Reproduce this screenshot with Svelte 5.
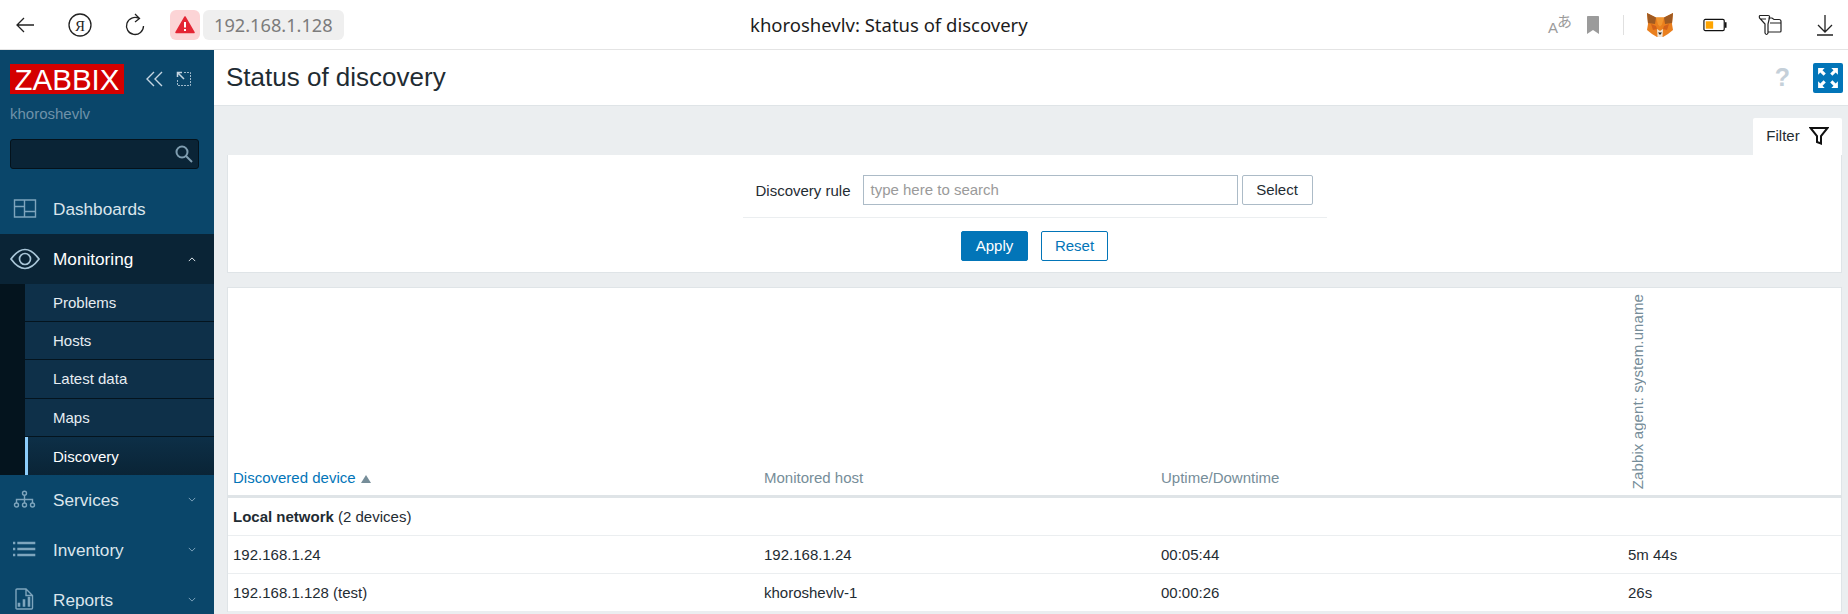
<script>
	const sections = [
		{ label: 'Dashboards', icon: 'dash' },
		{ label: 'Monitoring', icon: 'eye', open: true },
		{ label: 'Services', icon: 'tree', more: true },
		{ label: 'Inventory', icon: 'list', more: true },
		{ label: 'Reports', icon: 'report', more: true }
	];
	const submenu = ['Problems', 'Hosts', 'Latest data', 'Maps', 'Discovery'];
	const rows = [
		{ device: '192.168.1.24', host: '192.168.1.24', uptime: '00:05:44', uname: '5m 44s' },
		{ device: '192.168.1.128 (test)', host: 'khoroshevlv-1', uptime: '00:00:26', uname: '26s' }
	];
</script>

<div class="page">
	<header class="browser">
		<div class="tools">
			<svg class="tool" viewBox="0 0 24 24" fill="none" stroke="#222" stroke-width="1.3">
				<path d="M21 12H4M11 5l-7 7 7 7" />
			</svg>
			<svg class="tool" viewBox="0 0 24 24" fill="none" stroke="#222" stroke-width="1.3">
				<circle cx="12" cy="12" r="11" />
				<text x="12" y="17.500" text-anchor="middle" class="ya">Я</text>
			</svg>
			<svg class="tool" viewBox="0 0 24 24" fill="none" stroke="#222" stroke-width="1.3">
				<path d="M16 5.500A8.500 8.500 0 1 0 20.500 13M12 1l4.500 4.500L12 9" />
			</svg>
			<span class="warn">
				<svg viewBox="0 0 20 20" width="20" height="20">
					<path d="M10 2 19 17.500H1Z" fill="#e42535" stroke="#e42535" stroke-width="1.500" stroke-linejoin="round" />
					<path d="M9 7h2v5.500H9zM9 14h2v2H9z" fill="#fff" />
				</svg>
			</span>
			<span class="address">192.168.1.128</span>
		</div>
		<div class="tab-title">khoroshevlv: Status of discovery</div>
		<div class="tools tools-right">
			<span class="translate"><span>A</span><span class="kana">あ</span></span>
			<svg class="tool" viewBox="0 0 24 24">
				<path d="M6 3.500Q6 3 7 3h10q1 0 1 .5V21l-6-4-6 4Z" fill="#9b9b9b" />
			</svg>
			<span class="sep"></span>
			<svg class="tool fox" viewBox="0 0 26 24">
				<path d="M0 0 9 4.500h8L26 0l-1 11 1 6-5 4-5 3h-6l-5-3-5-4 1-6Z" fill="#ea7f1d" />
				<path d="M0 0 9 4.500 8 11 1 10ZM26 0 17 4.500 18 11l7-1Z" fill="#9f5a22" />
				<path d="M9 4.500h8l-2 7-2 2-2-2Z" fill="#f2962f" />
				<path d="M4 11l5 2 1 3-4 1ZM22 11l-5 2-1 3 4 1Z" fill="#d2601a" />
				<path d="M10 16l3 2 3-2-.5 8h-5Z" fill="#f1e6d8" />
				<path d="M11 19.500h4L13 22Z" fill="#222" />
			</svg>
			<svg class="tool" viewBox="0 0 26 24">
				<rect x="1" y="6" width="22" height="12" rx="1.500" fill="#fff" stroke="#111" stroke-width="1.300" />
				<rect x="3" y="8" width="8" height="8" fill="#ffa500" />
				<rect x="23.500" y="9" width="2" height="6" fill="#111" />
			</svg>
			<svg class="tool" viewBox="0 0 24 24" fill="none" stroke="#222" stroke-width="1.200">
				<path d="M2 2.500h8q2 0 1.500 2L10 11v9q-1.500 3-3 0v-9L1.500 5Q1 2.500 2 2.500ZM3 6h5" />
				<path d="M10.500 5H14l2 1.500h5q2 0 2 2V18q0 1-1 1H10M12 10h11" />
			</svg>
			<svg class="tool" viewBox="0 0 24 24" fill="none" stroke="#222" stroke-width="1.300">
				<path d="M12 2v17M5 12l7 7 7-7M4 22h16" />
			</svg>
		</div>
	</header>

	<div class="body">
		<aside class="sidebar">
			<div class="brand">
				<div class="logo-row">
					<span class="logo">ZABBIX</span>
					<svg class="collapse" viewBox="0 0 18 16" fill="none" stroke="#c5d6e2" stroke-width="1.400">
						<path d="M9 1 2 8l7 7M17 1l-7 7 7 7" />
					</svg>
					<svg class="expand" viewBox="0 0 16 16" fill="none" stroke="#9db8ca">
						<path d="M8 1.500h6.500v13h-13V8" stroke-dasharray="2 1" />
						<path d="M2 2l6 6M1.500 6V1.500H6" stroke="#c5d6e2" stroke-width="1.500" />
					</svg>
				</div>
				<div class="user">khoroshevlv</div>
				<div class="search">
					<svg viewBox="0 0 18 18" width="18" height="18" fill="none" stroke="#7f9db0" stroke-width="2">
						<circle cx="7" cy="7" r="5.500" />
						<path d="M11 11l6 6" />
					</svg>
				</div>
			</div>

			<nav>
				{#each sections as item}
					<div class="item" class:open={item.open}>
						<svg class="item-icon" viewBox="0 0 24 24" fill="none" stroke="#7ea5bd" stroke-width="1.400">
							{#if item.icon === 'dash'}
								<path d="M1.500 3h21v17h-21ZM11.500 3v17M11.500 14.500h11M1.500 9.500h10" />
							{:else if item.icon === 'eye'}
								<path d="M-2 12q14-19 28 0q-14 19-28 0Z" stroke="#a9c6d8" stroke-width="1.700" />
								<circle cx="12" cy="12" r="5.500" stroke="#a9c6d8" stroke-width="1.700" />
							{:else if item.icon === 'tree'}
								<circle cx="11.500" cy="5.300" r="2" />
								<circle cx="3.500" cy="17" r="2" />
								<circle cx="11.500" cy="17" r="2" />
								<circle cx="19.500" cy="17" r="2" />
								<path d="M11.500 7.300V15M3.500 15v-3.500h16V15" />
							{:else if item.icon === 'list'}
								<path d="M0 5h2.300M0 11h2.300M0 17h2.300M4.300 5h18M4.300 11h18M4.300 17h18" stroke-width="2.500" />
							{:else}
								<path d="M4 1h9l6.500 6.500V20q0 1-1 1H4q-1 0-1-1V2q0-1 1-1ZM13 1v6.500h6.500" />
								<path d="M6 18.700v-4M11 18.700v-7.500M16 18.700v-10" stroke-width="2.600" />
							{/if}
						</svg>
						<span class="item-label">{item.label}</span>
						{#if item.open || item.more}
							<svg class="chevron" viewBox="0 0 10 6" fill="none" stroke={item.open ? '#e6eef3' : '#7ea5bd'} stroke-width="1.200">
								<path d={item.open ? 'M1 5l4-4 4 4' : 'M1 1l4 4 4-4'} />
							</svg>
						{/if}
					</div>
					{#if item.open}
						<ul class="submenu">
							{#each submenu as entry}
								<li class:selected={entry === 'Discovery'}>{entry}</li>
							{/each}
						</ul>
					{/if}
				{/each}
			</nav>
		</aside>

		<main>
			<div class="title-bar">
				<h1>Status of discovery</h1>
				<span class="help">?</span>
				<span class="kiosk">
					<svg viewBox="0 0 20 20" width="22" height="22" fill="#fff">
						<path d="M1 1h6L5 3l3 3-2 2-3-3-2 2ZM19 1h-6l2 2-3 3 2 2 3-3 2 2ZM1 19h6l-2-2 3-3-2-2-3 3-2-2ZM19 19h-6l2-2-3-3 2-2 3 3 2-2Z" />
					</svg>
				</span>
			</div>

			<div class="content">
				<div class="filter-tab">
					<span>Filter</span>
					<svg viewBox="0 0 20 20" width="20" height="20" fill="none" stroke="#111" stroke-width="2">
						<path d="M1.500 2h17l-6.500 8v7.500l-4-1.500v-6Z" />
					</svg>
				</div>
				<section class="filter">
					<div class="form">
						<div class="form-row">
							<span class="form-label">Discovery rule</span>
							<span class="input">type here to search</span>
							<span class="button">Select</span>
						</div>
						<div class="form-actions">
							<span class="apply">Apply</span>
							<span class="reset">Reset</span>
						</div>
					</div>
				</section>

				<section class="results">
					<table>
						<colgroup>
							<col style="width: 531px" />
							<col style="width: 397px" />
							<col style="width: 467px" />
							<col />
						</colgroup>
						<thead>
							<tr>
								<th class="sorted">Discovered device <span class="arrow"></span></th>
								<th>Monitored host</th>
								<th>Uptime/Downtime</th>
								<th><span class="vertical">Zabbix agent: system.uname</span></th>
							</tr>
						</thead>
						<tbody>
							<tr>
								<td class="group" colspan="4"><b>Local network</b> (2 devices)</td>
							</tr>
							{#each rows as row}
								<tr>
									<td>{row.device}</td>
									<td>{row.host}</td>
									<td>{row.uptime}</td>
									<td>{row.uname}</td>
								</tr>
							{/each}
						</tbody>
					</table>
				</section>
			</div>
		</main>
	</div>
</div>

<style>
	:global(body) {
		margin: 0;
		background: #ebeef0;
		font-family: 'Liberation Sans', Arial, sans-serif;
	}

	.page {
		display: flex;
		flex-direction: column;
		width: 1848px;
		height: 614px;
		overflow: hidden;
	}

	.browser {
		display: grid;
		grid-template-columns: 750px auto 1fr;
		align-items: center;
		flex: none;
		height: 49px;
		background: #fff;
		border-bottom: 1px solid #e4e4e4;
	}

	.tools {
		display: flex;
		align-items: center;
		gap: 31px;
		padding-left: 13px;
	}

	.tools-right {
		justify-content: flex-end;
		padding: 0 11px 0 0;
	}

	.tool {
		flex: none;
		width: 24px;
		height: 24px;
	}

	.fox {
		width: 26px;
		margin: 0 -1px;
	}

	.ya {
		font: 15px 'Liberation Serif', serif;
		fill: #222;
		stroke: none;
	}

	.warn {
		display: flex;
		align-items: center;
		justify-content: center;
		width: 30px;
		height: 30px;
		margin-left: -8px;
		background: #fcd4d6;
		border-radius: 6px;
	}

	.address {
		margin-left: -28px;
		padding: 0 11px;
		line-height: 30px;
		background: #efefef;
		border-radius: 6px;
		color: #7c7c7c;
		font: 18.200px/30px 'Noto Sans', sans-serif;
	}

	.tab-title {
		color: #1c1c1c;
		font: 18.500px 'Noto Sans', sans-serif;
	}

	.translate {
		position: relative;
		flex: none;
		width: 22px;
		height: 24px;
		padding-left: 2px;
		margin-right: -20px;
		color: #9b9b9b;
		font-size: 15px;
		line-height: 30px;
	}

	.kana {
		position: absolute;
		top: -4px;
		left: 11px;
		font: 15px/24px 'Noto Sans CJK JP', sans-serif;
	}

	.sep {
		flex: none;
		width: 1px;
		height: 20px;
		margin: 0 -7px 0 -13px;
		background: #e0e0e0;
	}

	.body {
		display: flex;
		flex: 1;
		min-height: 0;
	}

	.sidebar {
		flex: none;
		width: 214px;
		background: #0a466a;
	}

	.brand {
		height: 134px;
		padding: 14px 15px 0 10px;
		box-sizing: border-box;
	}

	.logo-row {
		display: flex;
		align-items: center;
	}

	.logo {
		width: 114px;
		height: 30px;
		background: #d40000;
		color: #fff;
		font-size: 29.500px;
		line-height: 31px;
		text-align: center;
	}

	.collapse {
		width: 18px;
		height: 16px;
		margin-left: 21px;
	}

	.expand {
		width: 16px;
		height: 16px;
		margin-left: 13px;
	}

	.user {
		margin-top: 11px;
		color: #6f92a9;
		font-size: 15px;
		line-height: 18px;
	}

	.search {
		display: flex;
		align-items: center;
		justify-content: flex-end;
		box-sizing: border-box;
		height: 30px;
		margin-top: 16px;
		padding-right: 5px;
		background: #0a2436;
		border: 1px solid #04121b;
		border-radius: 3px;
	}

	.item {
		display: flex;
		align-items: center;
		height: 50px;
		padding-left: 13px;
	}

	.item.open {
		background: #0a2436;
	}

	.item-icon {
		flex: none;
		width: 24px;
		height: 24px;
		overflow: visible;
	}

	.item-label {
		margin-left: 16px;
		padding-top: 1px;
		color: #dbe5ec;
		font-size: 17.200px;
	}

	.open .item-label {
		color: #fff;
	}

	.chevron {
		width: 8px;
		height: 5px;
		margin-left: auto;
		margin-right: 18px;
	}

	.submenu {
		margin: 0;
		padding: 0 0 0 25px;
		list-style: none;
		background: #04141e;
	}

	.submenu li {
		box-sizing: border-box;
		height: 38.200px;
		padding-left: 28px;
		background: #0e3049;
		border-bottom: 1px solid #04141e;
		color: #e6edf2;
		font-size: 15px;
		line-height: 38px;
	}

	.submenu li.selected {
		padding: 1px 0 0 25px;
		background: linear-gradient(#0d2f47, #0a2436);
		border-bottom: 0;
		border-left: 3px solid #8ccdfb;
		color: #fff;
	}

	main {
		flex: 1;
		min-width: 0;
	}

	.title-bar {
		display: flex;
		align-items: center;
		box-sizing: border-box;
		height: 56px;
		padding: 0 5px 0 12px;
		background: #fff;
		border-bottom: 1px solid #dfe4e7;
	}

	h1 {
		margin: 0 auto 0 0;
		color: #1f2c33;
		font-size: 26px;
		font-weight: 400;
	}

	.help {
		margin-right: 23px;
		color: #c5d0d9;
		font-size: 25px;
		font-weight: 700;
	}

	.kiosk {
		display: flex;
		align-items: center;
		justify-content: center;
		width: 30px;
		height: 30px;
		background: #0275b8;
		border-radius: 2px;
	}

	.content {
		display: flex;
		flex-direction: column;
		padding: 12px 6px 0 13px;
		color: #1f2c33;
		font-size: 15px;
	}

	.filter-tab {
		display: flex;
		align-items: center;
		justify-content: center;
		gap: 9px;
		align-self: flex-end;
		box-sizing: border-box;
		width: 89px;
		height: 37px;
		padding-bottom: 2px;
		background: #fff;
		border-radius: 2px 2px 0 0;
	}

	.filter {
		height: 118px;
		box-sizing: border-box;
		background: #fff;
		border-bottom: 1px solid #dfe4e7;
		border-left: 1px solid #dfe4e7;
		border-right: 1px solid #dfe4e7;
	}

	.form {
		width: 584px;
		margin: 0 auto;
		padding-top: 20px;
	}

	.form-row {
		display: flex;
		align-items: center;
		height: 30px;
		padding-bottom: 12px;
		border-bottom: 1px solid #ebeef0;
	}

	.form-label {
		flex: none;
		width: 108px;
		margin-right: 12px;
		text-align: right;
	}

	.input {
		flex: none;
		box-sizing: border-box;
		width: 375px;
		height: 30px;
		padding-left: 7px;
		border: 1px solid #acbbc7;
		color: #9a9a9a;
		line-height: 28px;
	}

	.button {
		flex: none;
		box-sizing: border-box;
		width: 71px;
		height: 30px;
		margin-left: 4px;
		border: 1px solid #acbbc7;
		border-radius: 2px;
		line-height: 28px;
		text-align: center;
	}

	.form-actions {
		display: flex;
		justify-content: center;
		gap: 13px;
		margin-top: 13px;
	}

	.apply,
	.reset {
		box-sizing: border-box;
		width: 67px;
		height: 30px;
		border: 1px solid #0275b8;
		border-radius: 2px;
		line-height: 28px;
		text-align: center;
	}

	.apply {
		background: #0275b8;
		color: #fff;
	}

	.reset {
		color: #0275b8;
	}

	.results {
		box-sizing: border-box;
		height: 325px;
		margin-top: 14px;
		background: #fff;
		border: 1px solid #dfe4e7;
	}

	table {
		width: 100%;
		table-layout: fixed;
		border-collapse: collapse;
	}

	th {
		box-sizing: border-box;
		height: 208px;
		padding: 0 6px 9px 5px;
		border-bottom: 3px solid #dfe4e7;
		color: #768d99;
		font-weight: 400;
		text-align: left;
		vertical-align: bottom;
	}

	th.sorted {
		color: #0275b8;
	}

	.arrow {
		display: inline-block;
		width: 0;
		height: 0;
		margin-left: 1px;
		border: 5px solid transparent;
		border-top: 0;
		border-bottom: 8px solid #768d99;
	}

	.vertical {
		display: block;
		margin: 0 0 -4px 1px;
		writing-mode: vertical-rl;
		transform: rotate(180deg);
		white-space: nowrap;
		letter-spacing: 0.1px;
	}

	td {
		height: 38px;
		box-sizing: border-box;
		padding: 0 6px 0 5px;
		border-bottom: 1px solid #ebeef0;
	}

	td.group {
		height: 39px;
	}
</style>
